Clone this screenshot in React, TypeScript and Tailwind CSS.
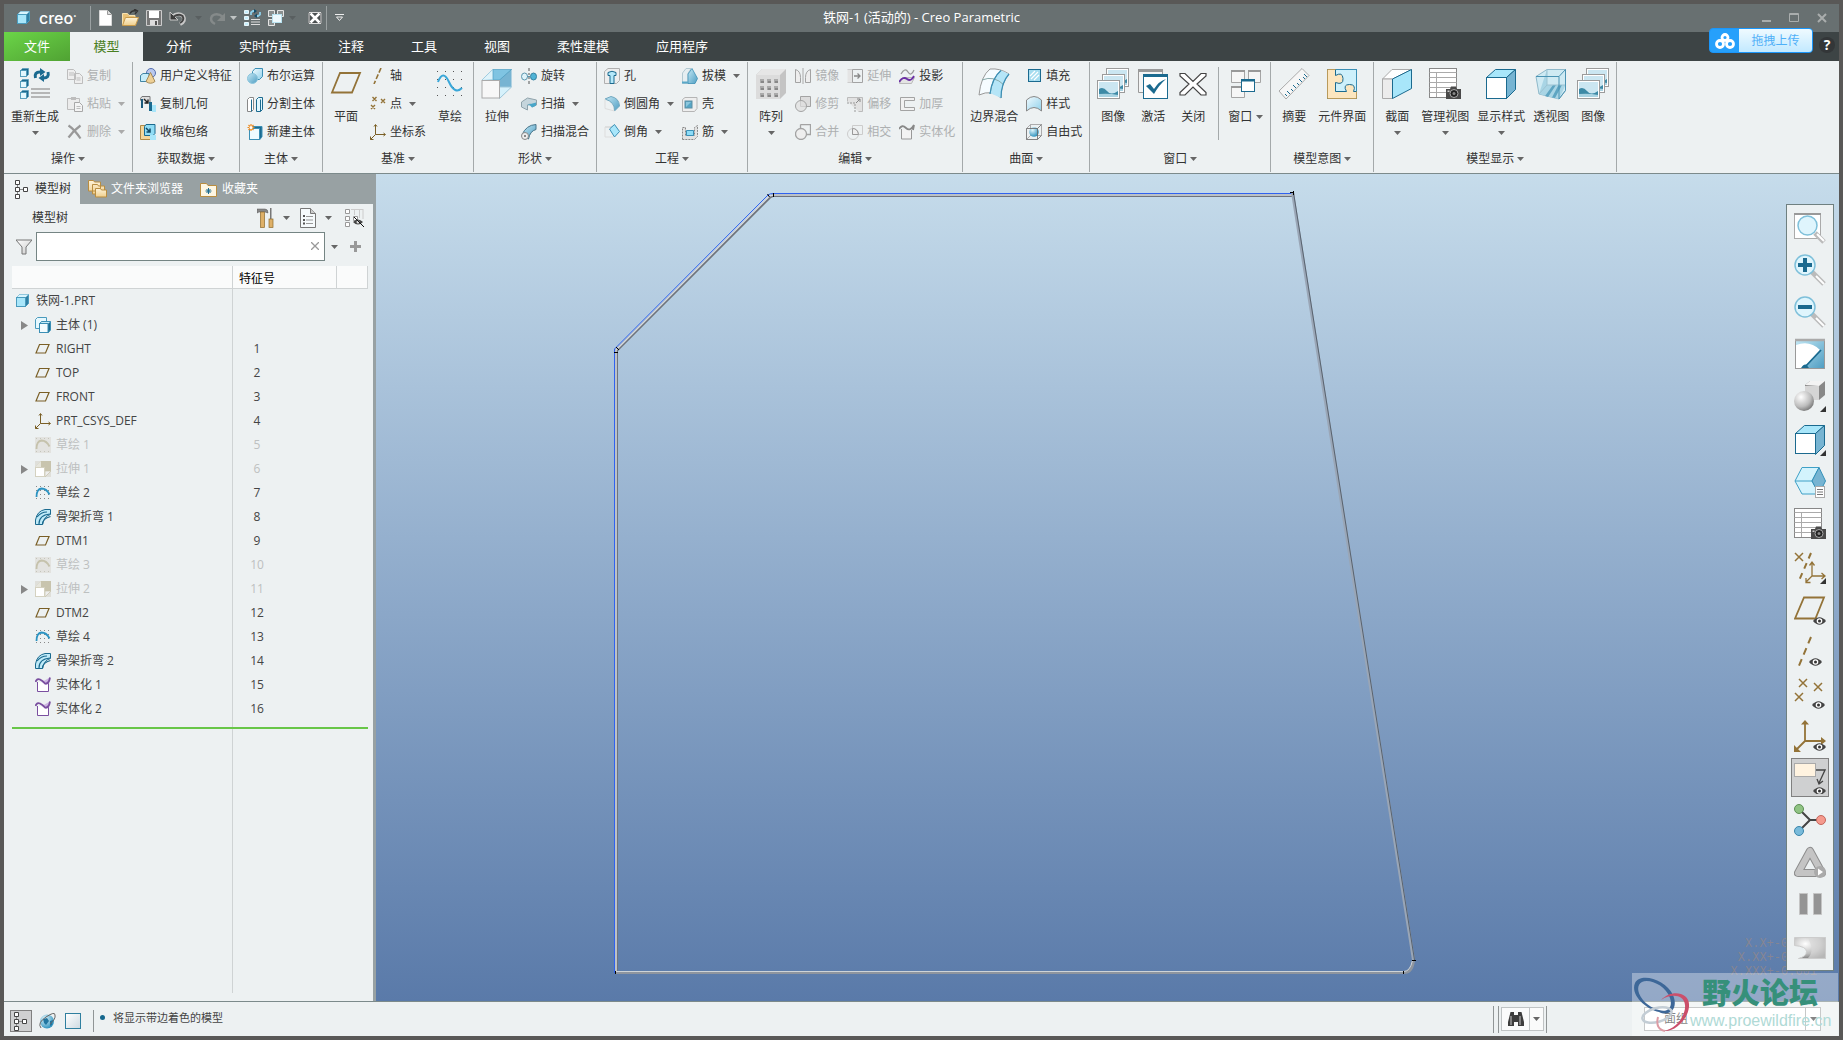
import type { ReactNode } from "react";

const STEEL = "#1b6a8f";
const GOLD = "#937338";
const GREY = "#a3a3a3";

function Ic({ s = 16, children }: { s?: number; children: ReactNode }) {
  return (
    <svg width={s} height={s} viewBox={`0 0 ${s} ${s}`} fill="none" className="shrink-0" aria-hidden="true">
      {children}
    </svg>
  );
}

function Arrow({ color = "#666" }: { color?: string }) {
  return (
    <svg width="7" height="4" viewBox="0 0 7 4" className="shrink-0" aria-hidden="true">
      <path d="M0 0h7L3.500 4z" fill={color} />
    </svg>
  );
}

// shared gradients, referenced by id from every icon
function Defs() {
  return (
    <svg width="0" height="0" className="absolute" aria-hidden="true">
      <defs>
        <linearGradient id="aqua" x1="0" y1="0" x2="1" y2="1">
          <stop offset="0" stopColor="#f2fbff" />
          <stop offset="1" stopColor="#8fd0ea" />
        </linearGradient>
        <linearGradient id="deep" x1="0" y1="0" x2="1" y2="1">
          <stop offset="0" stopColor="#c4e8f5" />
          <stop offset="1" stopColor="#4e9dc2" />
        </linearGradient>
        <linearGradient id="silver" x1="0" y1="0" x2="1" y2="1">
          <stop offset="0" stopColor="#ffffff" />
          <stop offset="1" stopColor="#c9c9c9" />
        </linearGradient>
        <linearGradient id="wood" x1="0" y1="0" x2="0" y2="1">
          <stop offset="0" stopColor="#fdf3da" />
          <stop offset="1" stopColor="#f0cf8c" />
        </linearGradient>
        <radialGradient id="ball" cx="0.350" cy="0.300" r="0.800">
          <stop offset="0" stopColor="#ffffff" />
          <stop offset="0.600" stopColor="#bdbdbd" />
          <stop offset="1" stopColor="#6a6a6a" />
        </radialGradient>
        <radialGradient id="blueBall" cx="0.350" cy="0.300" r="0.700">
          <stop offset="0" stopColor="#e2f6fd" />
          <stop offset="1" stopColor="#3596c0" />
        </radialGradient>
      </defs>
    </svg>
  );
}

const eye = (x: number, y: number) => (
  <g transform={`translate(${x} ${y})`}>
    <path d="M0 4Q6.500-3.500 13 4Q6.500 11.500 0 4z" fill="#444" />
    <circle cx="6.500" cy="4" r="2.800" fill="#fff" />
    <circle cx="6.500" cy="4" r="1.500" fill="#333" />
  </g>
);

const camera = (x: number, y: number) => (
  <g transform={`translate(${x} ${y})`}>
    <path d="M0 3h4l1-2.500h5L11 3h4v10H0z" fill="#4a4a4a" />
    <rect x="1.500" y="4.500" width="2" height="1.500" fill="#ccc" />
    <circle cx="8" cy="7.500" r="4" fill="#222" stroke="#aaa" />
    <circle cx="8" cy="7.500" r="1.500" fill="#888" />
  </g>
);

const corner = <path d="M32 26v6h-6z" fill="#333" />;

const smallCube = (x: number, y: number) => (
  <g transform={`translate(${x} ${y})`}>
    <path d="M.5 2.500L2.500.500h6v6l-2 2h-6z" fill={STEEL} stroke="#5c9fbe" strokeWidth="0.800" />
    <rect x="0.500" y="2.500" width="6" height="6" fill="#e2f7fe" stroke="#4994b5" strokeWidth="0.800" />
  </g>
);

const picture = (x: number, y: number) => (
  <g transform={`translate(${x} ${y})`}>
    <rect x="0.500" y="0.500" width="22" height="18" fill="#fff" stroke="#9b9b9b" />
    <rect x="2" y="2" width="19" height="15" fill="#cbe6f1" />
    <path d="M2 9q4-3 8 2t11 0v6H2z" fill="#3d8aa6" />
    <path d="M2 14q10-1 19 1v2H2z" fill="#a9d3e2" />
  </g>
);

const icons: Record<string, ReactNode> = {
  // quick access bar
  newFile: (
    <Ic s={18}>
      <path d="M2.500 1.500h8l4 4v11h-12z" fill="#fff" stroke="#d8d8d8" />
      <path d="M10.500 1.500v4h4" fill="#ddd" stroke="#999" />
    </Ic>
  ),
  open: (
    <Ic s={18}>
      <path d="M1.500 16V4.500h5l1.500 2h6v3" fill="#e8c178" stroke="#f8e2b0" />
      <path d="M1.500 16.500l3-8h13l-3 8z" fill="url(#wood)" stroke="#c89a4b" />
      <path d="M9 4.500q2-3.500 6-2.500M13 0l3.500 2-2.500 3" stroke="#333" strokeWidth="1.400" />
    </Ic>
  ),
  save: (
    <Ic s={18}>
      <path d="M1.500 1.500h15v15h-15z" fill="#777" stroke="#ccc" />
      <rect x="4" y="2" width="10" height="7" fill="#fff" />
      <rect x="5" y="11" width="8" height="5" fill="#ddd" />
      <rect x="10" y="12" width="2" height="4" fill="#555" />
    </Ic>
  ),
  undo: (
    <Ic s={18}>
      <path d="M3 8q6-5 11-1 3 5-3 8" stroke="#c8c8c8" strokeWidth="4" />
      <path d="M1 3v8h8z" fill="#3b3b3b" stroke="#c8c8c8" />
      <path d="M4 8q6-4 9.500-1 2.500 4-2.500 7" stroke="#444" strokeWidth="2" />
    </Ic>
  ),
  redo: (
    <Ic s={18}>
      <path d="M15 8q-6-5-11-1-3 5 3 8" stroke="#858a8a" strokeWidth="2.500" />
      <path d="M17 4v8H9z" fill="#858a8a" />
    </Ic>
  ),
  regenMini: (
    <Ic s={18}>
      <path d="M1.500 1.500h4v3h-4zM1.500 7.500h4v3h-4zM1.500 13.500h4v3h-4z" fill="#c7eefb" stroke="#e8f6fb" />
      <path d="M8 10.500h9M8 13h9M8 15.500h9" stroke="#ddd" />
      <path d="M8 6V3.500L10 2h2M17 3v2.500L15 7h-2" stroke="#8fd0ea" strokeWidth="1.800" />
      <path d="M11 0v4.500L14 2zM14 4.500V9L11 7z" fill="#164e6b" />
    </Ic>
  ),
  windowsMini: (
    <Ic s={18}>
      <path d="M1.500 1.500h6v6h-6zM10.500 1.500h6v6h-6zM1.500 10.500h6v6h-6z" fill="#8b9090" stroke="#e5e5e5" />
      <rect x="5.500" y="5.500" width="9" height="8" fill="#eef9fd" stroke="#b8e2f0" />
    </Ic>
  ),
  closeMini: (
    <Ic s={14}>
      <path d="M0 1h14v12H0z" fill="#4a4f50" />
      <path d="M2.500 2.500l9 9M11.500 2.500l-9 9" stroke="#fff" strokeWidth="2.500" />
      <path d="M1 1.500h12v11H1z" stroke="#ddd" />
    </Ic>
  ),

  // ribbon, small
  copy: (
    <Ic>
      <path d="M.500 1.500h6l2 2v8h-8zM7.500 5.500h5l3 3v7h-8z" fill="#eee" stroke="#bdbdbd" />
      <path d="M2 5h5M2 7h5M9.500 10h4M9.500 12h4" stroke="#bdbdbd" />
    </Ic>
  ),
  paste: (
    <Ic>
      <path d="M.500 2.500h12v11H.500z" fill="#ececec" stroke="#bdbdbd" />
      <path d="M4 1h5v3H4z" fill="#bdbdbd" />
      <path d="M7.500 6.500h5l3 3v6h-8z" fill="#f4f4f4" stroke="#a8a8a8" />
      <path d="M9.500 10.500h4M9.500 12.500h4" stroke="#bdbdbd" />
    </Ic>
  ),
  remove: (
    <Ic>
      <path d="M1.500 1.500q6 4 12 13M13.500 1.500q-7 5-12 12" stroke="#999" strokeWidth="2.200" />
    </Ic>
  ),
  udf: (
    <Ic>
      <circle cx="11" cy="5" r="4.500" fill="#b9c8ee" stroke="#5570b0" />
      <path d="M.500 7.500L3 5.500h6v6l-2 2H.500z" fill="#c7edfa" stroke={STEEL} strokeWidth="0.800" />
      <path d="M10.500 4.500l4.500 9q-4.500 3.500-9 0z" fill="#eed096" stroke="#a58a58" />
    </Ic>
  ),
  copyGeom: (
    <Ic>
      <path d="M.500 4.500V2.500L2 .500h8v7" fill="#ddd" stroke="#777" />
      <rect x="1" y="3" width="2" height="9" fill="#1b5a7c" />
      <rect x="9" y="6" width="3" height="9" fill={STEEL} />
      <rect x="12" y="9" width="4" height="7" fill="#a8e6fa" />
      <path d="M4 3l4 4M8 3.500V7H4.500" stroke="#222" strokeWidth="1.400" />
    </Ic>
  ),
  shrinkwrap: (
    <Ic>
      <path d="M.500 1.500h10v14H.500z" fill="#f4d69b" stroke="#b08a45" />
      <path d="M4.500 2.500L6 .500h9v9l-2 2H4.500z" fill="#8fdcf5" stroke={STEEL} />
      <path d="M6 4l4 4M10 4.500V8H6.500" stroke="#0f4a66" strokeWidth="1.500" />
      <rect x="10" y="11" width="6" height="5" fill="#a8e6fa" />
    </Ic>
  ),
  boolean: (
    <Ic>
      <path d="M5.500 3.500L8 .500h7.500v8l-3 3h-7z" fill="url(#aqua)" stroke="#3b8fb5" />
      <circle cx="5.500" cy="10.500" r="5" fill="url(#deep)" stroke="#8cc5dc" />
    </Ic>
  ),
  split: (
    <Ic>
      <path d="M.500 3.500l2-2h4v12l-2 2h-4z" fill="#fff" stroke="#888" />
      <path d="M9.500 3.500l2-2h4v12l-2 2h-4z" fill="#dff6fe" stroke={STEEL} />
      <path d="M4.500 3.500v12M13.500 3.500v12" stroke={STEEL} />
    </Ic>
  ),
  newBody: (
    <Ic>
      <path d="M2.500 4.500L5 2.500h10v10l-2 3H2.500z" fill={STEEL} stroke="#3b8fb5" />
      <path d="M2.500 4.500h10v11h-10z" fill="#effbff" stroke="#3b8fb5" />
      <path d="M4 0v7M.500 3.500h7M1.500 1l5 5M6.500 1l-5 5" stroke="#ee8a1d" strokeWidth="1.200" />
      <circle cx="4" cy="3.500" r="1.500" fill="#fff" />
    </Ic>
  ),
  axis: (
    <Ic>
      <path d="M11 0L4 16" stroke={GOLD} strokeWidth="1.600" strokeDasharray="5 2" />
    </Ic>
  ),
  points: (
    <Ic>
      <path d="M2.500 1l4 4M6.500 1l-4 4M11 3l4 4M15 3l-4 4M1 9l4 4M5 9l-4 4" stroke={GOLD} strokeWidth="1.400" />
    </Ic>
  ),
  csys: (
    <Ic>
      <path d="M5.500 1v9.500H15M5.500 10.500l-5 5M4 2.500l1.500-2L7 2.500M13.500 9l2 1.500-2 1.500M.500 12.500v3H3.500" stroke="#7a5f26" />
    </Ic>
  ),
  revolve: (
    <Ic>
      <path d="M8 0v3M8 5v2M8 9v2M8 13v3" stroke="#555" />
      <ellipse cx="3.500" cy="8.500" rx="3" ry="3.500" fill="#dff3fa" stroke="#5b95ad" />
      <ellipse cx="12.500" cy="8.500" rx="3" ry="3.500" fill="#4fb3d6" stroke="#3682a1" />
      <path d="M6 8.500h4" stroke="#5b95ad" />
    </Ic>
  ),
  sweep: (
    <Ic>
      <path d="M.500 6l6-4 9 2v5l-4 2-2-3-3 1v5l-6-3z" fill="#c5d5dc" stroke="#8fa2ab" />
      <path d="M6 9l9-2.500v3l-4 2-2-2z" fill="#49a6c9" />
    </Ic>
  ),
  sweptBlend: (
    <Ic>
      <path d="M1 11Q5 1 15 .500v5Q9 7 7.500 15z" fill="url(#deep)" stroke="#49758a" />
      <circle cx="4" cy="12" r="3.500" fill="#eee" stroke="#888" />
      <circle cx="4" cy="12" r="1" fill="#666" />
    </Ic>
  ),
  hole: (
    <Ic>
      <path d="M.500 3.500L4 .500h11.500v12l-3 3H.500z" fill="#eee" stroke="#b0b0b0" />
      <path d="M4 4.500q4-2.500 8 0v3h-2v8H6v-8H4z" fill="#b5e8f9" stroke={STEEL} />
    </Ic>
  ),
  round: (
    <Ic>
      <path d="M1 3l6-2.500Q15 2 15.500 10l-5 5Q11 6 1 3z" fill="url(#deep)" stroke="#6fa7bf" />
      <path d="M1 3v9.500L10.500 15" stroke="#ddd" />
    </Ic>
  ),
  chamfer: (
    <Ic>
      <path d="M1 3h6l4-2" stroke="#ccc" />
      <path d="M5.500 5l5-4.500 5 7-5 5.500z" fill="#a8e6fa" stroke="#3b8fb5" />
      <path d="M1 3v10h8.500" stroke="#ddd" />
    </Ic>
  ),
  draft: (
    <Ic>
      <path d="M.500 5L4 .500h5l-3 5v10H.500z" fill="#e6eef1" stroke="#b3c9d2" />
      <path d="M6 6l4-5.500 5.500 10-2.500 5H6z" fill="url(#deep)" stroke="#3b8fb5" strokeWidth="0.800" />
      <path d="M0 14.500h6" stroke="#5aa8c8" strokeWidth="2" />
    </Ic>
  ),
  shell: (
    <Ic>
      <path d="M.500 3.500L3 1.500h12v11l-2.500 3H.500z" fill="#eee" stroke="#b5b5b5" />
      <rect x="3" y="5" width="7" height="7" fill="#56a6c6" stroke="#5d8ea3" />
      <path d="M4 6h5l-5 5z" fill="#8cc7dd" />
    </Ic>
  ),
  rib: (
    <Ic>
      <path d="M.500 15.500v-12h3v8h9v-8l3-2v11l-3 3z" fill="#e2e2e2" stroke="#888" strokeDasharray="2 1" />
      <path d="M4.500 6.500h7v5h-7z" fill="#8edcf7" stroke="#3b8fb5" />
    </Ic>
  ),
  mirror: (
    <Ic>
      <path d="M8 0v16" stroke="#aaa" />
      <path d="M.500 1.500Q5.500 3 5.500 9.500v5h-5zM15.500 1.500Q10.500 3 10.500 9.500v5h5z" fill="#eee" stroke={GREY} />
    </Ic>
  ),
  trim: (
    <Ic>
      <path d="M5.500 .500h10v10h-10z" fill="#dcdcdc" stroke={GREY} />
      <circle cx="6" cy="10" r="5.500" fill="#e0e0e0" fillOpacity="0.700" stroke={GREY} />
    </Ic>
  ),
  merge: (
    <Ic>
      <path d="M5.500 .500h10v10h-4M5.500 4V.500" stroke={GREY} strokeWidth="1.300" />
      <circle cx="6" cy="10" r="5.500" fill="#eee" stroke={GREY} strokeWidth="1.300" />
    </Ic>
  ),
  extend: (
    <Ic>
      <path d="M.500 1.500h5v13h-5" fill="#e4e4e4" stroke="#ccc" />
      <path d="M5.500 1.500h10v13h-10z" stroke={GREY} />
      <path d="M7 8h6M10.500 5.500L13 8l-2.500 2.500" stroke="#888" strokeWidth="1.300" />
    </Ic>
  ),
  offset: (
    <Ic>
      <path d="M.500 5.500v-4h15v14h-4" fill="#e2e2e2" stroke="#bbb" />
      <path d="M0 7h8v9" stroke="#999" strokeDasharray="2 1" />
      <path d="M9 7l4-4M10 3h3v3" stroke="#888" />
    </Ic>
  ),
  intersect: (
    <Ic>
      <path d="M5.500 1.500h10v9h-10z" stroke="#ccc" />
      <circle cx="6" cy="10" r="5.500" stroke="#ccc" />
      <path d="M5.500 10.500V4.500q5 0 6 6z" fill="#eee" stroke="#999" />
    </Ic>
  ),
  project: (
    <Ic>
      <path d="M2 6q4-7 7-2t6-2" stroke="#999" strokeWidth="1.300" />
      <path d="M.500 15.500l3-6h12l-3 6z" fill="#e4e4e4" stroke="#bbb" />
      <path d="M0 14q4-6 8-3t7-3" stroke="#6b2fa5" strokeWidth="1.800" />
    </Ic>
  ),
  thicken: (
    <Ic>
      <path d="M15.500 1.500h-14v13h14v-3h-10v-7h10z" fill="#f1f1f1" stroke={GREY} />
    </Ic>
  ),
  solidify: (
    <Ic>
      <path d="M2.500 5v10h10V6" fill="#f3f3f3" stroke="#999" />
      <path d="M0 5q3-5 7-1t8-3l-1 5" stroke="#888" strokeWidth="1.800" />
    </Ic>
  ),
  fill: (
    <Ic>
      <rect x="2.500" y="1.500" width="12" height="12" fill="#a5dcef" stroke={STEEL} />
      <path d="M4 8l5-5M5 11l7-7M8 12l5-5" stroke="#fff" strokeWidth="1.200" />
    </Ic>
  ),
  style: (
    <Ic>
      <path d="M.500 4Q8-3 15.500 4v11Q8 8 .500 15z" fill="url(#aqua)" stroke="#888" />
    </Ic>
  ),
  freestyle: (
    <Ic>
      <path d="M4.500 .500h11v11M.500 4.500l4-4M4.500 .500v11h11M.500 15.500l4-4" stroke="#999" strokeWidth="0.800" />
      <circle cx="8" cy="8" r="4.800" fill="url(#blueBall)" />
      <path d="M.500 4.500h11v11h-11zM11.500 4.500l4-4M11.500 15.500l4-4" stroke="#666" strokeWidth="0.800" />
    </Ic>
  ),

  // ribbon, large
  regenerate: (
    <Ic s={32}>
      {smallCube(1, 0)}
      {smallCube(1, 11)}
      {smallCube(1, 22)}
      <path d="M16.500 10Q15 4 21 4M29 4q1.500 6-4.500 6" stroke={STEEL} strokeWidth="3" />
      <path d="M21 0v8l5.500-4zM25 6v8l-5.500-4z" fill={STEEL} />
      <path d="M12 21h19M12 25h19M12 29h19" stroke="#a3a3a3" strokeWidth="1.500" />
    </Ic>
  ),
  plane: (
    <Ic s={32}>
      <path d="M2 24.500L10 5h20l-8 19.500z" stroke={GOLD} strokeWidth="1.800" />
    </Ic>
  ),
  sketch: (
    <Ic s={32}>
      <path d="M3 3.500h26M3 11.500h26M3 19.500h26M3 27.500h26" stroke="#555" strokeDasharray="1 7" />
      <path d="M4 14q5-13 11 0t13 6" stroke="#3aa7d8" strokeWidth="2" />
    </Ic>
  ),
  extrude: (
    <Ic s={32}>
      <path d="M1 12L12 1.500h18.500L19 12z" fill="#7fc4e2" stroke="#4e9dc2" strokeWidth="0.700" />
      <path d="M1 12L12 1.500v10z" fill="#dff3fa" />
      <path d="M18.500 12L30.500 1.500V19H18.500z" fill="#77b4d2" />
      <path d="M18.500 19H30.500L18.500 30.500z" fill="#d6f1fb" stroke="#9cc7da" />
      <path d="M12 1.500v10M18.500 12l12-10.500" stroke="#4e9dc2" strokeWidth="0.700" />
      <rect x="1" y="12.500" width="17.500" height="17.500" fill="#f7f7f7" stroke="#aaa" />
    </Ic>
  ),
  pattern: (
    <Ic s={32}>
      <path d="M1 7l6-6h24v24l-6 6H1z" fill="#c4c4c4" />
      <path d="M1 7l6-6h24l-6 6z" fill="#e6e6e6" />
      <rect x="1" y="7" width="24" height="24" fill="#dcdcdc" />
      <path d="M5 11h4v4H5zM12 11h4v4h-4zM19 11h4v4h-4zM5 18h4v4H5zM12 18h4v4h-4zM19 18h4v4h-4zM5 25h4v4H5zM12 25h4v4h-4zM19 25h4v4h-4z" fill="#aaa" />
      <path d="M6 13h3v2H6zM13 13h3v2h-3zM20 13h3v2h-3zM6 20h3v2H6zM13 20h3v2h-3zM20 20h3v2h-3zM6 27h3v2H6zM13 27h3v2h-3zM20 27h3v2h-3z" fill="#888" />
    </Ic>
  ),
  boundary: (
    <Ic s={32}>
      <path d="M1 27Q3 8 12 1q10-1 19 5-8 9-8 24-9-9-22-3z" fill="#f6fcff" stroke="#999" />
      <path d="M23 2.500l8 3.500q-8 9-8 24l-11-5Q14 10 23 2.500z" fill="#b5e5f7" />
      <path d="M4 12q12-5 22 5M12 26Q14 10 23 2.500" stroke="#8aa" />
      <path d="M12 26Q14 10 23 2.500M23 30q0-15 8-24" stroke="#3b8fb5" strokeWidth="1.200" />
    </Ic>
  ),
  pictures: (
    <Ic s={32}>
      {picture(9, 0)}
      {picture(5, 6)}
      {picture(0, 12)}
    </Ic>
  ),
  activate: (
    <Ic s={32}>
      <path d="M1.500 1.500h24v23h-24z" fill="#f4f4f4" stroke="#999" />
      <path d="M1 2.500h25" stroke="#999" strokeWidth="3" />
      <rect x="6.500" y="6.500" width="24" height="24" fill="#fff" stroke={STEEL} />
      <path d="M6 7.500h25" stroke={STEEL} strokeWidth="3" />
      <path d="M9 18l4-2 4 5q5-8 12-10-7 6-12 15z" fill={STEEL} />
    </Ic>
  ),
  close: (
    <Ic s={32}>
      <path d="M3 5.500h5l8 8 8-8h5v2.500l-9 8 9 8.500V27h-5l-8-8-8 8H3v-2.500l9-8.500-9-8z" fill="#fff" stroke="#444" strokeWidth="1.200" />
    </Ic>
  ),
  windows: (
    <Ic s={32}>
      <path d="M1.500 2.500h13v12h-13zM18.500 2.500h12v12h-12zM1.500 18.500h13v11h-13z" fill="#f6f6f6" stroke="#a5a5a5" />
      <path d="M1 3h14M18 3h13M1 19h14" stroke="#999" strokeWidth="2" />
      <rect x="11.500" y="11.500" width="13" height="12" fill="#fff" stroke={STEEL} />
      <path d="M11 12.500h14" stroke={STEEL} strokeWidth="2" />
    </Ic>
  ),
  ruler: (
    <Ic s={32}>
      <path d="M1 23L24 .500l7 7L8 31z" fill="#f6f6f6" stroke="#aaa" />
      <path d="M9 28l-2-2M12 26l-3-3M15 23l-2-2M18 20l-3-3M21 17l-2-2M24 14l-3-3M27 11l-2-2M29 9l-3-3" stroke={STEEL} />
    </Ic>
  ),
  puzzle: (
    <Ic s={32}>
      <rect x="1.500" y="1.500" width="29" height="29" fill="#cdf0fb" stroke="#3b8fb5" />
      <path d="M1.500 1.500h8v6q7-4 7.500 3t-7.500 4v9h11q-4-7 3-7t4 7h3v7h-29z" fill="#fce6bf" stroke={STEEL} />
      <path d="M9.500 1.500h-8v29h29v-7" stroke="#b99a5b" />
    </Ic>
  ),
  section: (
    <Ic s={32}>
      <path d="M1.500 11L11 1.500h19.500L11.500 11z" fill="#fff" stroke="#aaa" />
      <path d="M1.500 11h10v19.500h-10z" fill="#ececec" stroke="#aaa" />
      <path d="M11.500 11l19-9.500v19l-19 10z" fill="#a8e6fa" stroke={STEEL} />
    </Ic>
  ),
  viewManager: (
    <Ic s={32}>
      <rect x="0.500" y="0.500" width="27" height="29" fill="#fff" stroke="#888" />
      <path d="M.500 4.500h27M.500 9.500h27M.500 14.500h27M.500 19.500h27M.500 24.500h27M7.500 4v25" stroke="#aaa" />
      {camera(17, 18)}
    </Ic>
  ),
  displayStyle: (
    <Ic s={32}>
      <path d="M1.500 9.500l9-8h20l-9 8z" fill="#a8e6fa" stroke={STEEL} />
      <path d="M21.500 9.500l9-8v20l-9 9z" fill="#77b4d2" stroke={STEEL} />
      <rect x="1.500" y="9.500" width="20" height="21" fill="#fff" stroke={STEEL} />
    </Ic>
  ),
  perspective: (
    <Ic s={32}>
      <path d="M1 8.500L12 1.500h18.500v21L24 31 4 26z" fill="#cfeaf3" stroke="#8fb9ca" />
      <path d="M12 1.500V17h18.500L24 31 4 26z" fill="#a9d5e5" />
      <path d="M10 28l8-11h3l-8 12zM17 29.500L23.500 17H27l-7 13z" fill="#5fa5c2" />
      <path d="M12 1.500V17L4 26M12 17h18.500" stroke="#9cc3d2" />
      <path d="M1 8.500h23l6.500-7v21L24 31V8.500" stroke="#4b93b3" />
    </Ic>
  ),

  // view toolbar
  refit: (
    <Ic s={32}>
      <rect x="0.500" y="1.500" width="26" height="25" fill="#fff" stroke="#aaa" />
      <path d="M0 2h27" stroke="#999" strokeWidth="2" />
      <path d="M21 21l9 9" stroke="#bbb" strokeWidth="5" />
      <path d="M23 22l7 7" stroke="#fff" strokeWidth="2" />
      <circle cx="13.500" cy="13.500" r="9.500" fill="#dff5fd" stroke="#7fc0da" strokeWidth="1.500" />
    </Ic>
  ),
  zoomIn: (
    <Ic s={32}>
      <path d="M18 18l12 12" stroke="#bbb" strokeWidth="5" />
      <path d="M22 22l8 8" stroke="#fff" strokeWidth="2" />
      <circle cx="11" cy="11" r="10" fill="#dff5fd" stroke="#7fc0da" strokeWidth="1.500" />
      <path d="M4 11h14M11 4v14" stroke={STEEL} strokeWidth="4" />
    </Ic>
  ),
  zoomOut: (
    <Ic s={32}>
      <path d="M18 18l12 12" stroke="#bbb" strokeWidth="5" />
      <path d="M22 22l8 8" stroke="#fff" strokeWidth="2" />
      <circle cx="11" cy="11" r="10" fill="#dff5fd" stroke="#7fc0da" strokeWidth="1.500" />
      <path d="M4 11h14" stroke={STEEL} strokeWidth="4" />
    </Ic>
  ),
  repaint: (
    <Ic s={32}>
      <rect x="1.500" y="1.500" width="29" height="29" fill="url(#deep)" stroke="#999" />
      <path d="M2 7q14-5 24 5L13 26q-5 1-5 4H2z" fill="#fff" />
      <path d="M27 12L11 29" stroke={STEEL} strokeWidth="1.800" />
      <path d="M7 30q4-7 8 0z" fill={STEEL} />
      <path d="M1 2h30" stroke="#aaa" strokeWidth="2.500" />
    </Ic>
  ),
  shading: (
    <Ic s={32}>
      <path d="M11 5l5-4h15v14l-6 5H11z" fill="#888" />
      <path d="M11 5l5-4h15l-6 5z" fill="#f3f3f3" />
      <rect x="11" y="6" width="14" height="14" fill="#d5d5d5" />
      <circle cx="10" cy="21" r="10" fill="url(#ball)" />
      {corner}
    </Ic>
  ),
  cubeView: (
    <Ic s={32}>
      <path d="M1.500 9.500l9-8h20l-9 8z" fill="#a8e6fa" stroke={STEEL} />
      <path d="M21.500 9.500l9-8v20l-9 9z" fill="#77b4d2" stroke={STEEL} />
      <rect x="1.500" y="9.500" width="20" height="20" fill="#fff" stroke={STEEL} />
      {corner}
    </Ic>
  ),
  orient: (
    <Ic s={32}>
      <path d="M1 15L8 1.500h17L18 15l7 13H8z" fill="#d3f3fd" stroke="#3fa0c6" />
      <path d="M25 1.500l6.500 13.500L25 28l-7-13z" fill="#77b4d2" stroke="#3390b8" />
      <path d="M1 15h17" stroke="#3fa0c6" />
      <rect x="21.500" y="20.500" width="9" height="11" fill="#fff" stroke="#aaa" />
      <path d="M23 23.500h6M23 26h6M23 28.500h6" stroke="#777" />
    </Ic>
  ),
  datumAll: (
    <Ic s={32}>
      <path d="M1 1l8 8M9 1L1 9" stroke={GOLD} strokeWidth="1.500" />
      <path d="M17 1L4 31" stroke={GOLD} strokeWidth="2" strokeDasharray="6 5" />
      <path d="M18 11v13h12M18 24l-6 6M15.500 13.500L18 10l2.500 3.500M27.500 21l3.500 3-3.500 3M12 26v4.500h4.500" stroke={GOLD} strokeWidth="1.300" />
      {corner}
    </Ic>
  ),
  planeEye: (
    <Ic s={32}>
      <path d="M1 24.500L10 3.500h20l-8.500 21z" stroke={GOLD} strokeWidth="1.800" />
      {eye(19, 23)}
    </Ic>
  ),
  axisEye: (
    <Ic s={32}>
      <path d="M17 1L4 32" stroke={GOLD} strokeWidth="2" strokeDasharray="7 5" />
      {eye(15, 22)}
    </Ic>
  ),
  pointsEye: (
    <Ic s={32}>
      <path d="M5 1l8 8M13 1L5 9M20 5l8 8M28 5l-8 8M1 15l8 8M9 15l-8 8" stroke={GOLD} strokeWidth="1.500" />
      {eye(18, 23)}
    </Ic>
  ),
  csysEye: (
    <Ic s={32}>
      <path d="M11 3v18h18M11 21l-9 9" stroke={GOLD} strokeWidth="1.800" />
      <path d="M7 4.500L11 0l4 4.500zM27 17l5 4-5 4zM0 25v7h7z" fill={GOLD} />
      {eye(19, 23)}
    </Ic>
  ),
  annotationEye: (
    <Ic s={32}>
      <rect x="0.500" y="1.500" width="21" height="13" fill="#fff3e0" stroke="#aaa" />
      <path d="M22 8h9l-6 13M23 17l2 5 4-3" stroke="#444" strokeWidth="1.300" />
      {eye(19, 25)}
    </Ic>
  ),
  spin: (
    <Ic s={32}>
      <path d="M5 5l11 11h11M16 16L5 27" stroke="#444" strokeWidth="2" />
      <circle cx="5" cy="5" r="4.500" fill="#8fc383" stroke="#5d8f54" />
      <circle cx="27" cy="16" r="4.500" fill="#f59a8e" stroke="#c3665c" />
      <circle cx="5" cy="27" r="4.500" fill="#79bbdb" stroke="#3b86ab" />
    </Ic>
  ),
  simulate: (
    <Ic s={32}>
      <path d="M16 5L4 27h24z" stroke="#8d8d8d" strokeWidth="8" strokeLinejoin="round" />
      <path d="M16 5L4 27h24z" stroke="#c4c4c4" strokeWidth="6" strokeLinejoin="round" />
      <circle cx="26" cy="26" r="6" fill="#aaa" />
      <path d="M24 22.500v7l5-3.500z" fill="#fff" />
    </Ic>
  ),
  pause: (
    <Ic s={32}>
      <path d="M5.500 5.500h8v21h-8zM19.500 5.500h8v21h-8z" fill="#949494" stroke="#c4c4c4" />
    </Ic>
  ),
  bend: (
    <Ic s={32}>
      <path d="M.500 5.500h31v21h-27q8-2 8-7t-12-6z" fill="url(#ball)" stroke="#ccc" />
      <path d="M14 6h17v20H14q7-7 0-20z" fill="#d9d9d9" fillOpacity="0.700" />
    </Ic>
  ),

  // model tree
  part: (
    <Ic>
      <path d="M.500 4.500l3-3h9v9l-3 3h-9z" fill="#2f7fa3" stroke="#4a9bbd" />
      <path d="M.500 4.500l3-3h9l-3 3z" fill="#d8f4fd" />
      <rect x="0.500" y="4.500" width="9" height="9" fill="#a8e6fa" stroke="#4a9bbd" />
    </Ic>
  ),
  bodies: (
    <Ic>
      <path d="M.500 2.500l2-2h9v8l-2 3h-9z" fill="#e6f8fe" stroke="#4a9bbd" />
      <path d="M4.500 6.500l2-2h9v8.500l-2 2.500h-9z" fill={STEEL} stroke="#3b8fb5" />
      <path d="M5 6.500L6.500 5H15l-1.500 1.500z" fill="#c5ecf9" />
      <rect x="4.500" y="6.500" width="8.500" height="9" fill="#f3fcff" stroke="#3b8fb5" />
    </Ic>
  ),
  treePlane: (
    <Ic>
      <path d="M1 12L4.500 3.500H14L10.500 12z" stroke="#7a5f26" strokeWidth="1.200" />
    </Ic>
  ),
  treeSketch: (
    <Ic>
      <path d="M1 1.500h14M1 5.500h14M1 9.500h14M1 13.500h14" stroke="#888" strokeDasharray="1 3" />
      <path d="M1.500 12q0-8 5-8.500 5 0 8 6" stroke="#2b93c2" strokeWidth="1.800" />
    </Ic>
  ),
  treeSketchOff: (
    <Ic>
      <rect width="16" height="16" fill="#e3e3e0" />
      <path d="M1 1.500h14M1 14.500h14" stroke="#c5c5bb" strokeDasharray="1 3" />
      <path d="M1.500 12q0-8 5-8.500 5 0 8 6" stroke="#c5c2ac" strokeWidth="1.800" />
    </Ic>
  ),
  treeExtrudeOff: (
    <Ic>
      <rect width="16" height="16" fill="#dfdfda" />
      <path d="M6 0h10v10l-6 6V6H0z" fill="#c8c4ae" />
      <path d="M0 6l6-6v6z" fill="#e6e5dc" />
      <path d="M10 10h6l-6 6z" fill="#eee" stroke="#c8c4ae" strokeWidth="0.700" />
      <rect x="0.500" y="6.500" width="9" height="9" fill="#fff" stroke="#d4d1c0" />
    </Ic>
  ),
  spinalBend: (
    <Ic>
      <path d="M.500 15.500V11Q2 2 10 .500h5.500v5Q9 7 7.500 15.500z" fill="#bfeaf8" stroke={STEEL} />
      <path d="M4 15q0-9 11-10M7.500 15.500q0-6 8-8M2 8Q6 3 12 3" stroke={STEEL} strokeWidth="1.200" />
    </Ic>
  ),
  treeSolidify: (
    <Ic>
      <path d="M2.500 5v9.500h11V6" fill="#fff" stroke="#7a4fa0" />
      <path d="M7 5l7-4v5l-3 2z" fill="#cdb5e2" />
      <path d="M.500 5Q2 1 5 2.500t5 4Q14 7 15 .500" stroke="#7a4fa0" strokeWidth="1.800" />
    </Ic>
  ),
  treeTab: (
    <Ic s={20}>
      <path d="M3.500 4v12M4 10.500h9" stroke="#888" />
      <path d="M1.500 1.500h4v4h-4zM1.500 8.500h4v4h-4zM1.500 15.500h4v4h-4zM9.500 8.500h4v4h-4z" fill="#fff" stroke="#444" />
    </Ic>
  ),
  folders: (
    <Ic s={20}>
      <path d="M.500 1.500h5l1 1.500h6v9h-12zM4.500 5.500h5l1 1.500h6v8h-12z" fill="url(#wood)" stroke="#b98d40" />
      <path d="M7.500 9.500h5l1 1.500h5v7h-11z" fill="url(#wood)" stroke="#b98d40" />
    </Ic>
  ),
  favorites: (
    <Ic s={20}>
      <path d="M1.500 4.500h6l1.500 2h8.500v11h-16z" fill="#fdf6e3" stroke="#b98d40" />
      <path d="M9.500 9v6M6.500 12h6M7.500 10l4 4M11.500 10l-4 4" stroke={STEEL} />
    </Ic>
  ),
  tools: (
    <Ic s={20}>
      <path d="M0 1h8q3 0 3 4l-3-1H2L0 5z" fill="#888" stroke="#555" strokeWidth="0.500" />
      <rect x="3.500" y="4" width="4" height="15.500" fill="#deb068" stroke="#8d6a2c" strokeWidth="0.700" />
      <rect x="13" y="0" width="1.500" height="11" fill="#777" />
      <rect x="12" y="11" width="4" height="8.500" fill="#deb068" stroke="#8d6a2c" strokeWidth="0.700" />
    </Ic>
  ),
  settingsDoc: (
    <Ic s={20}>
      <path d="M1.500 .500h10l5 5v14h-15z" fill="#f6fafc" stroke="#777" />
      <path d="M11.500 .500v5h5" fill="#ccc" stroke="#777" />
      <path d="M7 8.500h7M7 12h7M7 15.500h7" stroke="#999" />
      <path d="M4 8h2M4 12h2M4 15.500h2" stroke="#555" strokeWidth="2" />
    </Ic>
  ),
  hideTree: (
    <Ic s={20}>
      <path d="M1.500 1.500h4v4h-4zM1.500 8.500h4v4h-4zM1.500 14.500h4v4h-4zM9.500 8.500h4v4h-4z" fill="#fff" stroke="#999" />
      <path d="M7 1.500h12M10.500 1v6M15.500 1v9M19 1v10" stroke="#ccc" />
      <path d="M9 14q5-5 10 0-5 5-10 0z" fill="#444" />
      <circle cx="14" cy="14" r="1.500" fill="#ddd" />
      <path d="M10 9l10 10" stroke="#111" />
    </Ic>
  ),
  funnel: (
    <Ic>
      <path d="M0 1h16L10 8v7H6V8z" fill="url(#silver)" stroke="#777" />
    </Ic>
  ),
  globe: (
    <Ic s={18}>
      <circle cx="9" cy="9.500" r="7" fill="url(#blueBall)" />
      <path d="M5 7l4-1 2 3-3 4-2-2zM12 9l3-1-1 5-2 1z" fill="#2176a0" />
      <path d="M3 16Q-1 11 8 5T17 3q1 4-5 9" stroke="#666" />
    </Ic>
  ),
  binoculars: (
    <Ic s={18}>
      <path d="M3.500 2h3.500v3h4V2h3.500L17 12v4h-6v-4H7v4H1v-4z" fill="#3d3d3d" />
      <path d="M4 6v9M13 6v9" stroke="#999" strokeWidth="1.500" />
    </Ic>
  ),
};

type Small = { icon: string; label: string; off?: boolean; menu?: boolean };

function SmallColumn({ items }: { items: Small[] }) {
  return (
    <div className="flex flex-col px-1">
      {items.map((it) => (
        <button
          key={it.label}
          disabled={it.off}
          className="flex h-7 items-center whitespace-nowrap text-[#333] disabled:text-[#adb0b1]"
        >
          {icons[it.icon]}
          <span className="ml-1">{it.label}</span>
          {it.menu && (
            <span className="ml-[7px]">
              <Arrow color={it.off ? "#aaa" : "#666"} />
            </span>
          )}
        </button>
      ))}
    </div>
  );
}

function Big({ icon, label, menu, sideMenu }: { icon: string; label: string; menu?: boolean; sideMenu?: boolean }) {
  return (
    <button className="flex min-w-10 flex-col items-center px-1 pt-1.5">
      {icons[icon]}
      <span className="mt-[7px] flex items-center gap-1 whitespace-nowrap leading-5">
        {label}
        {sideMenu && <Arrow />}
      </span>
      {menu && (
        <span className="mt-1">
          <Arrow />
        </span>
      )}
    </button>
  );
}

function Group({ title, children }: { title: string; children: ReactNode }) {
  return (
    <section className="flex shrink-0 flex-col border-r border-[#a4a9aa] px-[3px]">
      <div className="flex h-[84px] items-start">{children}</div>
      <button className="flex h-[26px] items-center justify-center gap-[3px]">
        {title}
        <Arrow />
      </button>
    </section>
  );
}

const tabs = ["分析", "实时仿真", "注释", "工具", "视图", "柔性建模", "应用程序"];

function TitleBar() {
  return (
    <header className="grid h-7 grid-cols-[1fr_auto_1fr] items-center bg-[#687071] text-white">
      <div className="flex items-center">
        <span className="ml-[13px] flex items-center gap-[6px]">
          {icons.part}
          <span className="w-10 font-[Inter,sans-serif] text-base leading-6 font-medium">
            creo<span className="align-super text-[6px] leading-none">•</span>
          </span>
        </span>
        <span className="ml-[11px] h-6 w-px bg-[#9ba1a2]" />
        <div className="ml-[6px] flex items-center gap-[6px]">
          <button aria-label="新建">{icons.newFile}</button>
          <button aria-label="打开">{icons.open}</button>
          <button aria-label="保存">{icons.save}</button>
          <button aria-label="撤销" className="flex items-center gap-2">
            {icons.undo}
            <Arrow color="#595f60" />
          </button>
          <button aria-label="重做" className="flex items-center gap-1">
            {icons.redo}
            <Arrow color="#c0c4c4" />
          </button>
          <button aria-label="重新生成">{icons.regenMini}</button>
          <button aria-label="窗口" className="flex items-center gap-1">
            {icons.windowsMini}
            <Arrow color="#595f60" />
          </button>
        </div>
        <button aria-label="关闭窗口" className="ml-3">
          {icons.closeMini}
        </button>
        <span className="ml-1 h-6 w-px bg-[#9ba1a2]" />
        <button aria-label="自定义" className="ml-2">
          <svg width="9" height="8" viewBox="0 0 9 8" fill="none" aria-hidden="true">
            <path d="M0 .500h9M1.500 3h6L4.500 6.500z" stroke="#eee" />
          </svg>
        </button>
      </div>
      <h1 className="text-[13px]">铁网-1 (活动的) - Creo Parametric</h1>
      <div className="flex items-center justify-end gap-[18px] pr-3 text-[#a9adad]">
        <button aria-label="最小化">
          <svg width="9" height="10" aria-hidden="true">
            <path d="M0 7h9v2H0z" fill="currentColor" />
          </svg>
        </button>
        <button aria-label="最大化">
          <svg width="10" height="10" fill="none" aria-hidden="true">
            <path d="M.500 .500h9v8h-9zM0 1.500h10" stroke="currentColor" />
          </svg>
        </button>
        <button aria-label="关闭">
          <svg width="10" height="10" fill="none" aria-hidden="true">
            <path d="M1 1l8 8M9 1L1 9" stroke="currentColor" strokeWidth="2" />
          </svg>
        </button>
      </div>
    </header>
  );
}

function TabBar() {
  return (
    <nav className="relative flex h-[29px] items-center bg-[#3d4445] text-[13px] text-white">
      <button className="h-full w-[66px] bg-linear-to-br from-[#6bd548] to-[#50a233]">文件</button>
      <button className="h-full w-[73px] bg-[#edf1f2] text-[#4a7f22]">模型</button>
      <div className="ml-[23px] flex gap-[47px]">
        {tabs.map((t) => (
          <button key={t}>{t}</button>
        ))}
      </div>
      <button className="absolute top-[-4px] right-[26px] flex h-[25px] w-[104px] items-stretch overflow-hidden rounded border border-[#1a96fa] bg-[#26a0fb] text-xs text-[#4fb0f8]">
        <span className="flex w-[29px] items-center justify-center">
          <svg width="20" height="16" viewBox="0 0 20 16" fill="none" stroke="#fff" strokeWidth="2.800" aria-hidden="true">
            <circle cx="10" cy="4.500" r="3" />
            <circle cx="5" cy="11" r="3.500" />
            <circle cx="15" cy="11" r="3.500" />
          </svg>
        </span>
        <span className="flex flex-1 items-center justify-center bg-linear-to-b from-[#effaff] to-[#c2e9ff]">拖拽上传</span>
      </button>
      <button
        aria-label="帮助"
        className="absolute right-1 bottom-2 flex size-4 items-center justify-center rounded-full bg-[#333638] text-sm font-bold"
      >
        ?
      </button>
    </nav>
  );
}

function Ribbon() {
  return (
    <div className="flex h-[113px] overflow-hidden border-b border-[#7c8a8b] bg-[#edf1f2] py-px">
      <Group title="操作">
        <Big icon="regenerate" label="重新生成" menu />
        <SmallColumn
          items={[
            { icon: "copy", label: "复制", off: true },
            { icon: "paste", label: "粘贴", off: true, menu: true },
            { icon: "remove", label: "删除", off: true, menu: true },
          ]}
        />
      </Group>
      <Group title="获取数据">
        <SmallColumn
          items={[
            { icon: "udf", label: "用户定义特征" },
            { icon: "copyGeom", label: "复制几何" },
            { icon: "shrinkwrap", label: "收缩包络" },
          ]}
        />
      </Group>
      <Group title="主体">
        <SmallColumn
          items={[
            { icon: "boolean", label: "布尔运算" },
            { icon: "split", label: "分割主体" },
            { icon: "newBody", label: "新建主体" },
          ]}
        />
      </Group>
      <Group title="基准">
        <Big icon="plane" label="平面" />
        <SmallColumn
          items={[
            { icon: "axis", label: "轴" },
            { icon: "points", label: "点", menu: true },
            { icon: "csys", label: "坐标系" },
          ]}
        />
        <Big icon="sketch" label="草绘" />
      </Group>
      <Group title="形状">
        <Big icon="extrude" label="拉伸" />
        <SmallColumn
          items={[
            { icon: "revolve", label: "旋转" },
            { icon: "sweep", label: "扫描", menu: true },
            { icon: "sweptBlend", label: "扫描混合" },
          ]}
        />
      </Group>
      <Group title="工程">
        <SmallColumn
          items={[
            { icon: "hole", label: "孔" },
            { icon: "round", label: "倒圆角", menu: true },
            { icon: "chamfer", label: "倒角", menu: true },
          ]}
        />
        <SmallColumn
          items={[
            { icon: "draft", label: "拔模", menu: true },
            { icon: "shell", label: "壳" },
            { icon: "rib", label: "筋", menu: true },
          ]}
        />
      </Group>
      <Group title="编辑">
        <Big icon="pattern" label="阵列" menu />
        <SmallColumn
          items={[
            { icon: "mirror", label: "镜像", off: true },
            { icon: "trim", label: "修剪", off: true },
            { icon: "merge", label: "合并", off: true },
          ]}
        />
        <SmallColumn
          items={[
            { icon: "extend", label: "延伸", off: true },
            { icon: "offset", label: "偏移", off: true },
            { icon: "intersect", label: "相交", off: true },
          ]}
        />
        <SmallColumn
          items={[
            { icon: "project", label: "投影" },
            { icon: "thicken", label: "加厚", off: true },
            { icon: "solidify", label: "实体化", off: true },
          ]}
        />
      </Group>
      <Group title="曲面">
        <Big icon="boundary" label="边界混合" />
        <SmallColumn
          items={[
            { icon: "fill", label: "填充" },
            { icon: "style", label: "样式" },
            { icon: "freestyle", label: "自由式" },
          ]}
        />
      </Group>
      <Group title="窗口">
        <Big icon="pictures" label="图像" />
        <Big icon="activate" label="激活" />
        <Big icon="close" label="关闭" />
        <span className="mx-[5px] mt-[5px] h-[73px] w-px bg-[#a4a9aa]" />
        <Big icon="windows" label="窗口" sideMenu />
      </Group>
      <Group title="模型意图">
        <Big icon="ruler" label="摘要" />
        <Big icon="puzzle" label="元件界面" />
      </Group>
      <Group title="模型显示">
        <Big icon="section" label="截面" menu />
        <Big icon="viewManager" label="管理视图" menu />
        <Big icon="displayStyle" label="显示样式" menu />
        <Big icon="perspective" label="透视图" />
        <Big icon="pictures" label="图像" />
      </Group>
    </div>
  );
}

type Row = { icon: string; name: string; id?: number; off?: boolean; open?: boolean; root?: boolean };

const rows: Row[] = [
  { icon: "part", name: "铁网-1.PRT", root: true },
  { icon: "bodies", name: "主体 (1)", open: true },
  { icon: "treePlane", name: "RIGHT", id: 1 },
  { icon: "treePlane", name: "TOP", id: 2 },
  { icon: "treePlane", name: "FRONT", id: 3 },
  { icon: "csys", name: "PRT_CSYS_DEF", id: 4 },
  { icon: "treeSketchOff", name: "草绘 1", id: 5, off: true },
  { icon: "treeExtrudeOff", name: "拉伸 1", id: 6, off: true, open: true },
  { icon: "treeSketch", name: "草绘 2", id: 7 },
  { icon: "spinalBend", name: "骨架折弯 1", id: 8 },
  { icon: "treePlane", name: "DTM1", id: 9 },
  { icon: "treeSketchOff", name: "草绘 3", id: 10, off: true },
  { icon: "treeExtrudeOff", name: "拉伸 2", id: 11, off: true, open: true },
  { icon: "treePlane", name: "DTM2", id: 12 },
  { icon: "treeSketch", name: "草绘 4", id: 13 },
  { icon: "spinalBend", name: "骨架折弯 2", id: 14 },
  { icon: "treeSolidify", name: "实体化 1", id: 15 },
  { icon: "treeSolidify", name: "实体化 2", id: 16 },
];

function ModelTree() {
  return (
    <aside className="flex w-[372px] shrink-0 flex-col border-r-[3px] border-[#98a1a3] bg-[#edf1f2]">
      <div className="-mr-[3px] flex h-[30px] items-stretch bg-[#98a1a3] text-white">
        <button className="flex w-[76px] items-center bg-[#edf1f2] pl-2.5 text-[#333]">
          {icons.treeTab}
          <span className="ml-px">模型树</span>
        </button>
        <button className="flex items-center gap-[3px] pl-2">
          {icons.folders}
          文件夹浏览器
        </button>
        <button className="flex items-center gap-[3px] pl-4">
          {icons.favorites}
          收藏夹
        </button>
      </div>

      <div className="flex h-7 items-center pr-[9px] pl-7">
        <h2 className="flex-1">模型树</h2>
        <button aria-label="工具" className="flex items-center gap-[6px]">
          {icons.tools}
          <Arrow />
        </button>
        <button aria-label="设置" className="ml-[9px] flex items-center gap-[6px]">
          {icons.settingsDoc}
          <Arrow />
        </button>
        <button aria-label="显示" className="ml-3">
          {icons.hideTree}
        </button>
      </div>

      <div className="flex items-center pl-3">
        {icons.funnel}
        <div className="relative ml-1">
          <input
            aria-label="过滤"
            className="block h-[29px] w-[289px] border border-[#758584] bg-white px-1 outline-none"
          />
          <button aria-label="清除" className="absolute top-2.5 right-1.5">
            <svg width="8" height="8" aria-hidden="true">
              <path d="M0 0l8 8M8 0L0 8" stroke="#999" strokeWidth="1.300" />
            </svg>
          </button>
        </div>
        <button aria-label="过滤选项" className="ml-[6px]">
          <Arrow />
        </button>
        <button aria-label="添加" className="ml-3">
          <svg width="11" height="11" aria-hidden="true">
            <path d="M4 0h3v4h4v3H7v4H4V7H0V4h4z" fill="#999" />
          </svg>
        </button>
      </div>

      <div className="mx-2 mt-[5px] mb-2 flex flex-1 flex-col">
        <table className="w-[356px] table-fixed border-separate border-spacing-0 text-left">
          <thead>
            <tr className="h-[23px] bg-[#fafbfb]">
              <th aria-label="名称" className="w-[221px] border-r border-b border-[#cfd3d4]" />
              <th className="w-[104px] border-r border-b border-[#cfd3d4] p-0 pt-1 pl-1.5 leading-[18px] font-normal text-black">
                特征号
              </th>
              <th aria-label="更多" className="border-r border-b border-[#cfd3d4]" />
            </tr>
          </thead>
          <tbody>
            {rows.map((r) => (
              <tr key={r.name} className={r.off ? "h-6 text-[#bdc0c0]" : "h-6 text-[#444]"}>
                <td className="border-r border-[#cfd3d4] p-0">
                  <div className="flex items-center">
                    {!r.root && (
                      <span className="flex w-[19px] justify-end">
                        {r.open && (
                          <svg width="7" height="9" className="mr-[3px]" aria-hidden="true">
                            <path d="M0 0v9l7-4.500z" fill="#888" />
                          </svg>
                        )}
                      </span>
                    )}
                    <span className="ml-1">{icons[r.icon]}</span>
                    <span className={r.root ? "ml-1" : "ml-[5px]"}>{r.name}</span>
                  </div>
                </td>
                <td className="p-0">
                  <span className="block w-12 text-center">{r.id}</span>
                </td>
                <td className="p-0" />
              </tr>
            ))}
          </tbody>
        </table>
        <div className="h-[6px] w-[221px] border-r border-[#cfd3d4]" />
        <div className="h-0.5 w-[356px] bg-[#68c648]" />
        <div className="w-[221px] flex-1 border-r border-[#cfd3d4]" />
      </div>
    </aside>
  );
}

const viewTools = [
  ["refit", "zoomIn", "zoomOut", "repaint", "shading"],
  ["cubeView", "orient", "viewManager"],
  ["datumAll", "planeEye", "axisEye", "pointsEye", "csysEye", "annotationEye", "spin", "simulate", "pause"],
  ["bend"],
];

function Viewport() {
  return (
    <main className="relative min-w-0 flex-1 overflow-hidden bg-linear-to-b from-[#c6dceb] to-[#5a7aa9]">
      <svg className="absolute inset-0 h-full w-full" viewBox="0 0 1463 827" fill="none" role="img" aria-label="铁网-1">
        {/* tube body */}
        <path d="M240.500 798V176.500L394 23l3-1.500H916" stroke="#6f747c" strokeWidth="3" />
        <path d="M240 798V176L393.500 22l3.500-1H916" stroke="#d5dae0" strokeWidth="1.500" />
        <path d="M238.500 799V175L392 21q2-1.500 5-1.500H916" stroke="#2f62f0" />
        <path d="M916.500 18.500L1037.500 786" stroke="#9aa6b6" strokeWidth="3" />
        <path d="M917.500 18.500L1038.500 786" stroke="#59636f" />
        <path d="M239 798.500h789q8 0 9.500-12" stroke="#8e959f" strokeWidth="3" />
        <path d="M239 797.500h789q6 0 8.500-11" stroke="#cdd3d8" />
        {/* segment ends */}
        <path
          d="M238 178.500h4M397.500 19v4M391.500 20l2 3M240 173l3 3M914 18.500h4M917.500 17v4M1036 786.500h4M1027.500 797v3M239.500 797v3"
          stroke="#000"
        />
      </svg>

      <div className="absolute right-[22px] bottom-[22px] text-center font-['Liberation_Mono',monospace] text-xs leading-[14px] text-[#a08a80]/60">
        <p>X.X+-0.1</p>
        <p>X.XX+-0.01</p>
        <p>X.XXX+-0.001</p>
      </div>

      <div className="absolute top-[30px] right-[5px] flex w-12 flex-col gap-[5px] border border-[#6f8080] bg-[#edf1f2] px-1 py-[3px]">
        {viewTools.map((set) => (
          <div key={set[0]} className="flex flex-col gap-[3px]">
            {set.map((name) => (
              <button
                key={name}
                aria-label={name}
                aria-pressed={name === "annotationEye"}
                className="flex h-[39px] w-[38px] items-center justify-center border border-transparent aria-pressed:border-[#808080] aria-pressed:bg-[#cfd0d1]"
              >
                {icons[name]}
              </button>
            ))}
          </div>
        ))}
      </div>
    </main>
  );
}

function StatusBar() {
  return (
    <footer className="flex h-[35px] items-start border-t border-[#7c8a8b] bg-[#edf1f2] text-[#444]">
      <button aria-label="模型树" className="mt-2 ml-[6px] flex size-[22px] items-center justify-center border border-[#808080] bg-[#cfd0d1] pl-1">
        {icons.treeTab}
      </button>
      <button aria-label="浏览器" className="mt-[10px] ml-[6px]">
        {icons.globe}
      </button>
      <button
        aria-label="全屏"
        className="mt-[11px] ml-[9px] size-4 border border-[#2f7f9f] bg-linear-to-br from-white to-[#cfdbe2]"
      />
      <span className="mt-2 ml-3 h-[22px] w-px bg-[#909596]" />
      <span className="mt-[13px] ml-[6px] size-[5px] rounded-full bg-[#15678d]" />
      <p className="mt-1.5 ml-2 flex-1 text-[11px] leading-5">将显示带边着色的模型</p>

      <span className="mt-1 mr-1 h-[27px] w-px bg-[#909596]" />
      <span className="mt-1 mr-0.5 h-[27px] w-px bg-[#909596]" />
      <div className="mt-[5px] flex h-6 border border-[#bfc3c4] bg-[#fafbfb]">
        <button aria-label="搜索" className="flex w-[27px] items-center justify-center">
          {icons.binoculars}
        </button>
        <button aria-label="搜索选项" className="flex w-[14px] items-center justify-center border-l border-[#bfc3c4]">
          <Arrow />
        </button>
      </div>
      <span className="mt-1 ml-0.5 h-[27px] w-px bg-[#909596]" />
      <div className="relative mt-[5px] mr-[18px] ml-[97px]">
        <select
          aria-label="选择过滤器"
          defaultValue="面组"
          className="block h-6 w-[177px] appearance-none border border-[#a9acad] bg-white pl-[19px] text-xs outline-none"
        >
          <option>面组</option>
        </select>
        <span className="pointer-events-none absolute top-0 right-0 flex h-6 w-4 items-center justify-center border-l border-[#a9acad]">
          <Arrow color="#444" />
        </span>
      </div>
    </footer>
  );
}

function Watermark() {
  return (
    <div className="pointer-events-none absolute right-px bottom-0 flex h-[63px] w-[206px] bg-white/35">
      <svg width="57" height="63" viewBox="0 0 57 63" fill="none" className="shrink-0" aria-hidden="true">
        <path
          fillRule="evenodd"
          d="M3 10C8-1 34 6 41 22c6 14-4 22-14 17C14 36-2 22 3 10zM7 12C3 20 14 34 27 37c9 3 14-3 11-12C33 10 11 3 7 12z"
          fill="#3d6798"
        />
        <ellipse cx="25" cy="42" rx="15" ry="7" transform="rotate(-15 25 42)" stroke="#c3cdd5" strokeWidth="2.500" />
        <path d="M29 27C41 15 57 21 57 31c1 12-12 28-25 27 14-3 22-17 21-26-1-10-13-12-24-5z" fill="#cb4f6b" />
        <path d="M33 58q-10-2-7-14" stroke="#dd9ba4" strokeWidth="2" />
      </svg>
      <div className="whitespace-nowrap">
        <p className="pt-1 pl-[13px] text-[29px] leading-8 font-black text-[#36907a]">野火论坛</p>
        <p className="pl-px font-['Liberation_Sans',sans-serif] text-base leading-6 text-[#b0dad6]">www.proewildfire.cn</p>
      </div>
    </div>
  );
}

export default function App() {
  return (
    <div className="relative flex min-h-screen flex-col overflow-hidden border-4 border-[#595857] bg-[#edf1f2] font-['Open_Sans','Noto_Sans_CJK_SC',sans-serif] text-xs text-[#333]">
      <Defs />
      <TitleBar />
      <TabBar />
      <Ribbon />
      <div className="flex flex-1 items-stretch">
        <ModelTree />
        <Viewport />
      </div>
      <StatusBar />
      <Watermark />
    </div>
  );
}
